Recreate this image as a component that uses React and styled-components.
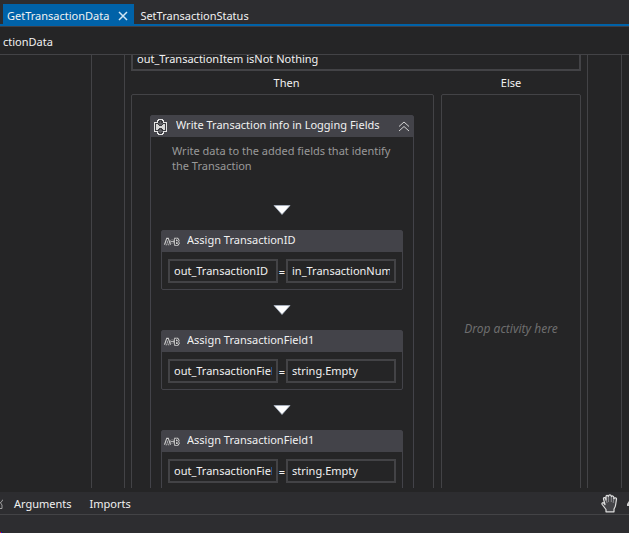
import React, { useState } from "react";
import styled, { createGlobalStyle } from "styled-components";

const assignments = [
  { title: "Assign TransactionID", to: "out_TransactionID", value: "in_TransactionNumber" },
  { title: "Assign TransactionField1", to: "out_TransactionField1", value: "string.Empty" },
  { title: "Assign TransactionField1", to: "out_TransactionField2", value: "string.Empty" },
];

const CloseIcon = () => (
  <svg width="10" height="10" viewBox="0 0 10 10" fill="none" stroke="#d0e6f5" strokeWidth="1.5">
    <path d="M1 1l8 8M9 1l-8 8" />
  </svg>
);

const SequenceIcon = () => (
  <svg width="15" height="16" viewBox="0 0 15 16" shapeRendering="crispEdges">
    <path
      d="M4.500 3.500v-2h1v-1h4v1h1v2h3v9h-3v2h-1v1h-4v-1h-1v-2h-3v-9z"
      fill="#3a3a3f"
      stroke="#e4e4e4"
    />
    <path d="M3 5h2v1h1v1h3V6h1V5h2v6h-2v-1H9V9H6v1H5v1H3z" fill="#d6d6d6" />
    <path d="M7 2h1v2h2v1H9v1H6V5H5V4h2zM7 10h1v1h1v1h1v1H8v1H7v-1H5v-1h1v-1h1z" fill="#606065" />
  </svg>
);

const CollapseIcon = () => (
  <svg width="12" height="11" viewBox="0 0 12 11" fill="none" stroke="#d4d4d4">
    <path d="M1 5.500l5-4.500 5 4.500M1 10l5-4.500 5 4.500" />
  </svg>
);

const AssignIcon = () => (
  <svg width="16" height="9" viewBox="0 0 16 9" fill="none">
    <g stroke="#cfcfcf" strokeWidth="2.600">
      <path d="M1.200 8L3.300 2h.4L5.800 8M2 6h3" />
      <path d="M6.500 4.500h4M8.500 2.800v3.400" />
      <path d="M11.500 2v5.500h2l.9-1.300-.7-1.400.5-1.400-.9-1.400z" />
    </g>
    <g stroke="#2f2f34" strokeWidth=".9">
      <path d="M1.500 8.200L3.500 2l2 6.200M2.500 6.200h2" />
      <path d="M7 3.600h2.600M7 5.400h2.600" />
      <path d="M11.500 2v5.500h2l.9-1.300-.7-1.400.5-1.400-.9-1.400zM11.500 4.700h2" />
    </g>
  </svg>
);

const ArrowIcon = () => (
  <svg width="18" height="10" viewBox="0 0 18 10">
    <path d="M1 .5h16L9 9.500z" fill="#fff" stroke="#a9b4c4" strokeWidth=".8" />
  </svg>
);

const HandIcon = () => (
  <svg width="18" height="19" viewBox="0 0 18 19">
    <path
      d="M5 17.800v-2.300L1.200 10.500c-.8-1.300.6-2.400 1.600-1.300L4 10.500 2.500 5c-.3-1.600 1.500-2 2-.6L5.200 6.500 5 2.800C5 1 7 1 7.300 2.600L7.500 2c.3-1.500 2.500-1.500 2.700 0l.3.8c.5-1.400 2.300-1 2.300.6l-.1 1.600c.5-1.800 3-1.500 2.800.2L14.600 11c-.2 1.800-.9 2.700-1.600 4v2.800z"
      fill="#444448"
      stroke="#dedede"
      strokeWidth="1.200"
      strokeLinejoin="round"
    />
    <path d="M7.400 3v5M10.300 3v5M12.700 5l-.5 4M5.200 6l.8 3" stroke="#8c8c90" fill="none" />
  </svg>
);

const SliverIcon = () => (
  <svg width="3" height="13" viewBox="0 0 3 13" fill="none" stroke="#a0a0a0">
    <path d="M3 2.500L1 5.500M0 5l2 3M0 11.500h2V8" />
  </svg>
);

const ZoomSliver = () => (
  <svg width="2" height="5" viewBox="0 0 2 5" fill="#d0d0d0">
    <path d="M2 0v5H0V3z" />
  </svg>
);

const CornerMark = () => (
  <svg width="2" height="1" viewBox="0 0 2 1">
    <path d="M0 0h1v1H0z" fill="#f00" />
    <path d="M1 0h1v1H1z" fill="#00f" />
  </svg>
);

const Assign = ({ title, to, value }) => {
  const [left, setLeft] = useState(to);
  const [right, setRight] = useState(value);

  return (
    <Activity>
      <ActivityHeader>
        <IconSlot>
          <AssignIcon />
        </IconSlot>
        <ActivityTitle>{title}</ActivityTitle>
      </ActivityHeader>
      <AssignBody>
        <Expression aria-label="To" value={left} onChange={(e) => setLeft(e.target.value)} />
        <Equals>=</Equals>
        <Expression aria-label="Value" value={right} onChange={(e) => setRight(e.target.value)} />
      </AssignBody>
    </Activity>
  );
};

const App = () => {
  const [condition, setCondition] = useState("out_TransactionItem isNot Nothing");

  return (
    <>
      <GlobalStyle />
      <Window>
        <TabBar>
          <Tab $active>
            <TabButton>GetTransactionData</TabButton>
            <IconButton aria-label="Close">
              <CloseIcon />
            </IconButton>
          </Tab>
          <Tab>
            <TabButton>SetTransactionStatus</TabButton>
          </Tab>
        </TabBar>
        <Breadcrumb>ctionData</Breadcrumb>

        <Canvas>
          <OuterSequence>
            <IfActivity>
              <Expression
                aria-label="Condition"
                value={condition}
                onChange={(e) => setCondition(e.target.value)}
              />
              <Branches>
                <ThenLabel>Then</ThenLabel>
                <BranchLabel>Else</BranchLabel>
                <BranchBox>
                  <Activity>
                    <ActivityHeader>
                      <IconSlot>
                        <SequenceIcon />
                      </IconSlot>
                      <ActivityTitle>Write Transaction info in Logging Fields</ActivityTitle>
                      <IconButton aria-label="Collapse">
                        <CollapseIcon />
                      </IconButton>
                    </ActivityHeader>
                    <Annotation>Write data to the added fields that identify the Transaction</Annotation>
                    <Steps>
                      {assignments.map((item, index) => (
                        <React.Fragment key={index}>
                          <Connector>
                            <ArrowIcon />
                          </Connector>
                          <Assign {...item} />
                        </React.Fragment>
                      ))}
                    </Steps>
                  </Activity>
                </BranchBox>
                <DropZone>Drop activity here</DropZone>
              </Branches>
            </IfActivity>
          </OuterSequence>
        </Canvas>

        <BottomBar>
          <SliverIcon />
          <PanelTabs>
            <TabButton>Arguments</TabButton>
            <TabButton>Imports</TabButton>
          </PanelTabs>
          <IconButton aria-label="Pan">
            <HandIcon />
          </IconButton>
          <ZoomSliver />
        </BottomBar>
        <StatusStrip>
          <CornerMark />
        </StatusStrip>
      </Window>
    </>
  );
};

export default App;

const GlobalStyle = createGlobalStyle`
  * {
    box-sizing: border-box;
  }
  body {
    margin: 0;
    background: #2d2d30;
  }
  svg {
    display: block;
    flex: none;
  }
  button, input {
    font: inherit;
    color: inherit;
  }
`;

// Window and bars
const Window = styled.div`
  display: flex;
  flex-direction: column;
  height: 100vh;
  overflow: hidden;
  font-family: "Noto Sans", "Segoe UI", sans-serif;
  font-size: 11px;
  line-height: 15px;
  color: #f1f1f1;
`;

const TabBar = styled.div`
  display: flex;
  flex: none;
  padding: 4px 3px 0;
  background: #2d2d30;
  border-bottom: 2px solid #0062a8;
`;

const Tab = styled.div`
  display: flex;
  align-items: center;
  gap: 9px;
  height: 20px;
  padding: 3px 6px 0 4px;
  background: ${({ $active }) => ($active ? "#0062a8" : "transparent")};
  & + & {
    padding-left: 6px;
  }
`;

const TabButton = styled.button`
  padding: 0;
  border: none;
  background: none;
  white-space: nowrap;
  cursor: pointer;
`;

const IconButton = styled.button`
  display: flex;
  flex: none;
  padding: 0;
  border: none;
  background: none;
  cursor: pointer;
`;

const Breadcrumb = styled.div`
  flex: none;
  padding: 7px 3px 5px;
  background: #252526;
  border-top: 1px solid #3f3f46;
  border-bottom: 1px solid #434346;
`;

const BottomBar = styled.div`
  display: flex;
  flex: none;
  align-items: center;
  height: 23px;
  background: #2d2d30;
  border-bottom: 1px solid #434346;
`;

const PanelTabs = styled.div`
  display: flex;
  flex: 1;
  gap: 18px;
  padding-left: 11px;
  & + button {
    margin-right: 8px;
  }
`;

const StatusStrip = styled.div`
  display: flex;
  flex: none;
  align-items: flex-end;
  height: 18px;
  background: #2d2d30;
`;

// Designer canvas, scrolled down inside the If activity
const Canvas = styled.main`
  display: flex;
  flex: 1;
  min-height: 0;
  padding: 0 7px 0 91px;
  overflow: hidden;
  background: #252526;
  border-bottom: 4px solid #252526;
`;

const OuterSequence = styled.div`
  flex: 1;
  min-width: 0;
  padding: 0 33px 0 32px;
  border: solid #434346;
  border-width: 0 1px;
`;

const IfActivity = styled.div`
  margin-top: -8px;
  padding: 0 6px;
  border: solid #434346;
  border-width: 0 1px;
`;

const Expression = styled.input`
  display: block;
  flex: 1;
  width: 100%;
  min-width: 0;
  height: 24px;
  padding: 0 4px 2px;
  border: 2px solid #434346;
  outline: none;
  background: #252526;
  &:focus {
    border-color: #0062a8;
  }
`;

const Branches = styled.div`
  display: grid;
  grid-template-columns: 1fr 140px;
  column-gap: 7px;
`;

const BranchLabel = styled.div`
  padding: 4px 0;
  text-align: center;
`;

const ThenLabel = styled(BranchLabel)`
  padding-left: 8px;
`;

const BranchBox = styled.div`
  min-width: 0;
  padding: 20px 19px 20px 18px;
  border: 1px solid #434346;
  border-radius: 2px;
`;

const DropZone = styled(BranchBox)`
  display: flex;
  align-items: center;
  justify-content: center;
  padding: 0;
  font-size: 12px;
  font-style: italic;
  color: #6e6e6e;
`;

// Activities
const Activity = styled.div`
  border: 1px solid #434349;
  border-radius: 2px;
  background: #252526;
`;

const ActivityHeader = styled.div`
  display: flex;
  align-items: center;
  height: 21px;
  padding-right: 3px;
  background: #434349;
`;

const IconSlot = styled.div`
  display: flex;
  flex: none;
  width: 25px;
  padding-left: 2px;
`;

const ActivityTitle = styled.div`
  flex: 1;
  min-width: 0;
  margin-right: 16px;
  padding-bottom: 4px;
  overflow: hidden;
  white-space: nowrap;
`;

const Annotation = styled.p`
  margin: 6px 16px 0 21px;
  color: #999;
`;

const Steps = styled.div`
  padding: 17px 10px 50px;
`;

const Connector = styled.div`
  display: flex;
  align-items: center;
  justify-content: center;
  height: 40px;
`;

const AssignBody = styled.div`
  display: flex;
  align-items: center;
  padding: 7px 6px 6px;
`;

const Equals = styled.span`
  width: 8px;
  text-align: center;
`;
